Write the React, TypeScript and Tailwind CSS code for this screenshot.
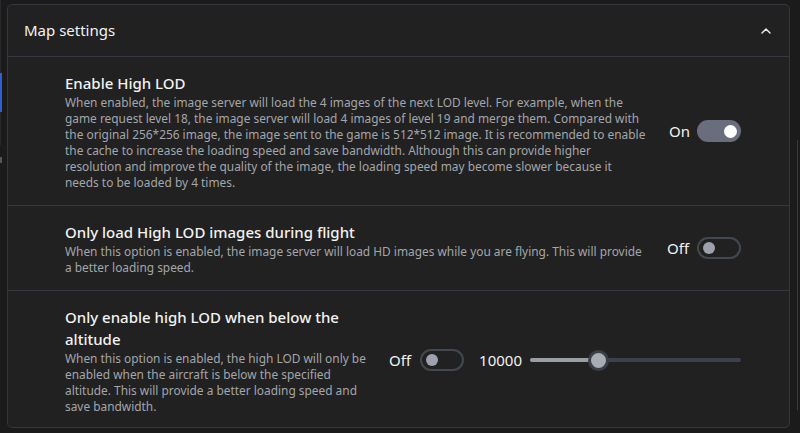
import { ChevronUp } from "lucide-react";

function Toggle({ on }: { on: boolean }) {
  return on ? (
    <div className="flex h-[22px] w-[44px] items-center justify-end rounded-full bg-[#6a6d7c] pr-[4px]">
      <div className="h-[13px] w-[13px] rounded-full bg-white" />
    </div>
  ) : (
    <div className="flex h-[22px] w-[44px] items-center rounded-full border-2 border-[#43474f] pl-[4px]">
      <div className="h-[12px] w-[12px] rounded-full bg-[#9ea1ab]" />
    </div>
  );
}

function Row({
  title,
  desc,
  children,
  last,
  descClass = "",
}: {
  title: string;
  desc: string;
  children: React.ReactNode;
  last?: boolean;
  descClass?: string;
}) {
  return (
    <div
      className={
        "flex items-center gap-5 pl-[57px] pr-[48px] pt-[15px] " +
        (last ? "pb-[13px]" : "border-b border-[#353840] pb-[15px]")
      }
    >
      <div className="flex-1">
        <div className="text-[15px] font-medium leading-[22px] text-[#f2f2f2]">{title}</div>
        <div className={"text-[11.9px] leading-[16px] text-[#a3a6ac] " + descClass}>{desc}</div>
      </div>
      <div className="flex items-center">{children}</div>
    </div>
  );
}

export default function App() {
  return (
    <div
      className="relative h-[433px] w-[800px] overflow-hidden bg-[#1b1b1b] pt-[4px] pl-[7px] pr-[10px]"
      style={{ fontFamily: '"Noto Sans", "Open Sans", sans-serif' }}
    >
      {/* sidebar remnants */}
      <div className="absolute left-0 top-0 h-[145px] w-[1px] bg-[#2a2a2e]" />
      <div className="absolute left-0 top-[73px] h-[39px] w-[2px] bg-[#2f5fd0]" />
      <div className="absolute left-0 top-[157px] h-[6px] w-[2px] bg-[#55585e]" />
      <div className="absolute right-[2px] top-[140px] h-[270px] w-[1px] bg-[#3a3a3e]" />

      <div className="rounded-[5px] border border-[#33363d] bg-[#212121]">
        <div className="flex h-[52px] items-center justify-between border-b border-[#353840] pl-[16px] pr-[15px]">
          <span className="text-[15px] text-[#f2f2f2]">Map settings</span>
          <ChevronUp size={16} strokeWidth={2.2} className="text-[#e8e8e8]" />
        </div>

        <Row
          title="Enable High LOD"
          descClass="max-w-[582px]"
          desc="When enabled, the image server will load the 4 images of the next LOD level. For example, when the game request level 18, the image server will load 4 images of level 19 and merge them. Compared with the original 256*256 image, the image sent to the game is 512*512 image. It is recommended to enable the cache to increase the loading speed and save bandwidth. Although this can provide higher resolution and improve the quality of the image, the loading speed may become slower because it needs to be loaded by 4 times."
        >
          <span className="mr-[7px] text-[15px] text-[#f2f2f2]">On</span>
          <Toggle on />
        </Row>

        <Row
          title="Only load High LOD images during flight"
          desc="When this option is enabled, the image server will load HD images while you are flying. This will provide a better loading speed."
        >
          <span className="mr-[8px] text-[15px] text-[#f2f2f2]">Off</span>
          <Toggle on={false} />
        </Row>

        <Row
          last
          title="Only enable high LOD when below the altitude"
          desc="When this option is enabled, the high LOD will only be enabled when the aircraft is below the specified altitude. This will provide a better loading speed and save bandwidth."
        >
          <span className="mr-[9px] text-[15px] text-[#f2f2f2]">Off</span>
          <Toggle on={false} />
          <span className="ml-[15px] mr-[8px] text-[15px] text-[#f2f2f2]">10000</span>
          <div className="relative flex h-[22px] w-[211px] items-center">
            <div className="h-[4px] w-full rounded-full bg-[#3d414b]" />
            <div className="absolute left-0 h-[4px] w-[68px] rounded-full bg-[#9a9da6]" />
            <div className="absolute left-[58px] h-[21px] w-[21px] rounded-full border-[3px] border-[#3a3e48] bg-[#a9acb5]" />
          </div>
        </Row>
      </div>
    </div>
  );
}
